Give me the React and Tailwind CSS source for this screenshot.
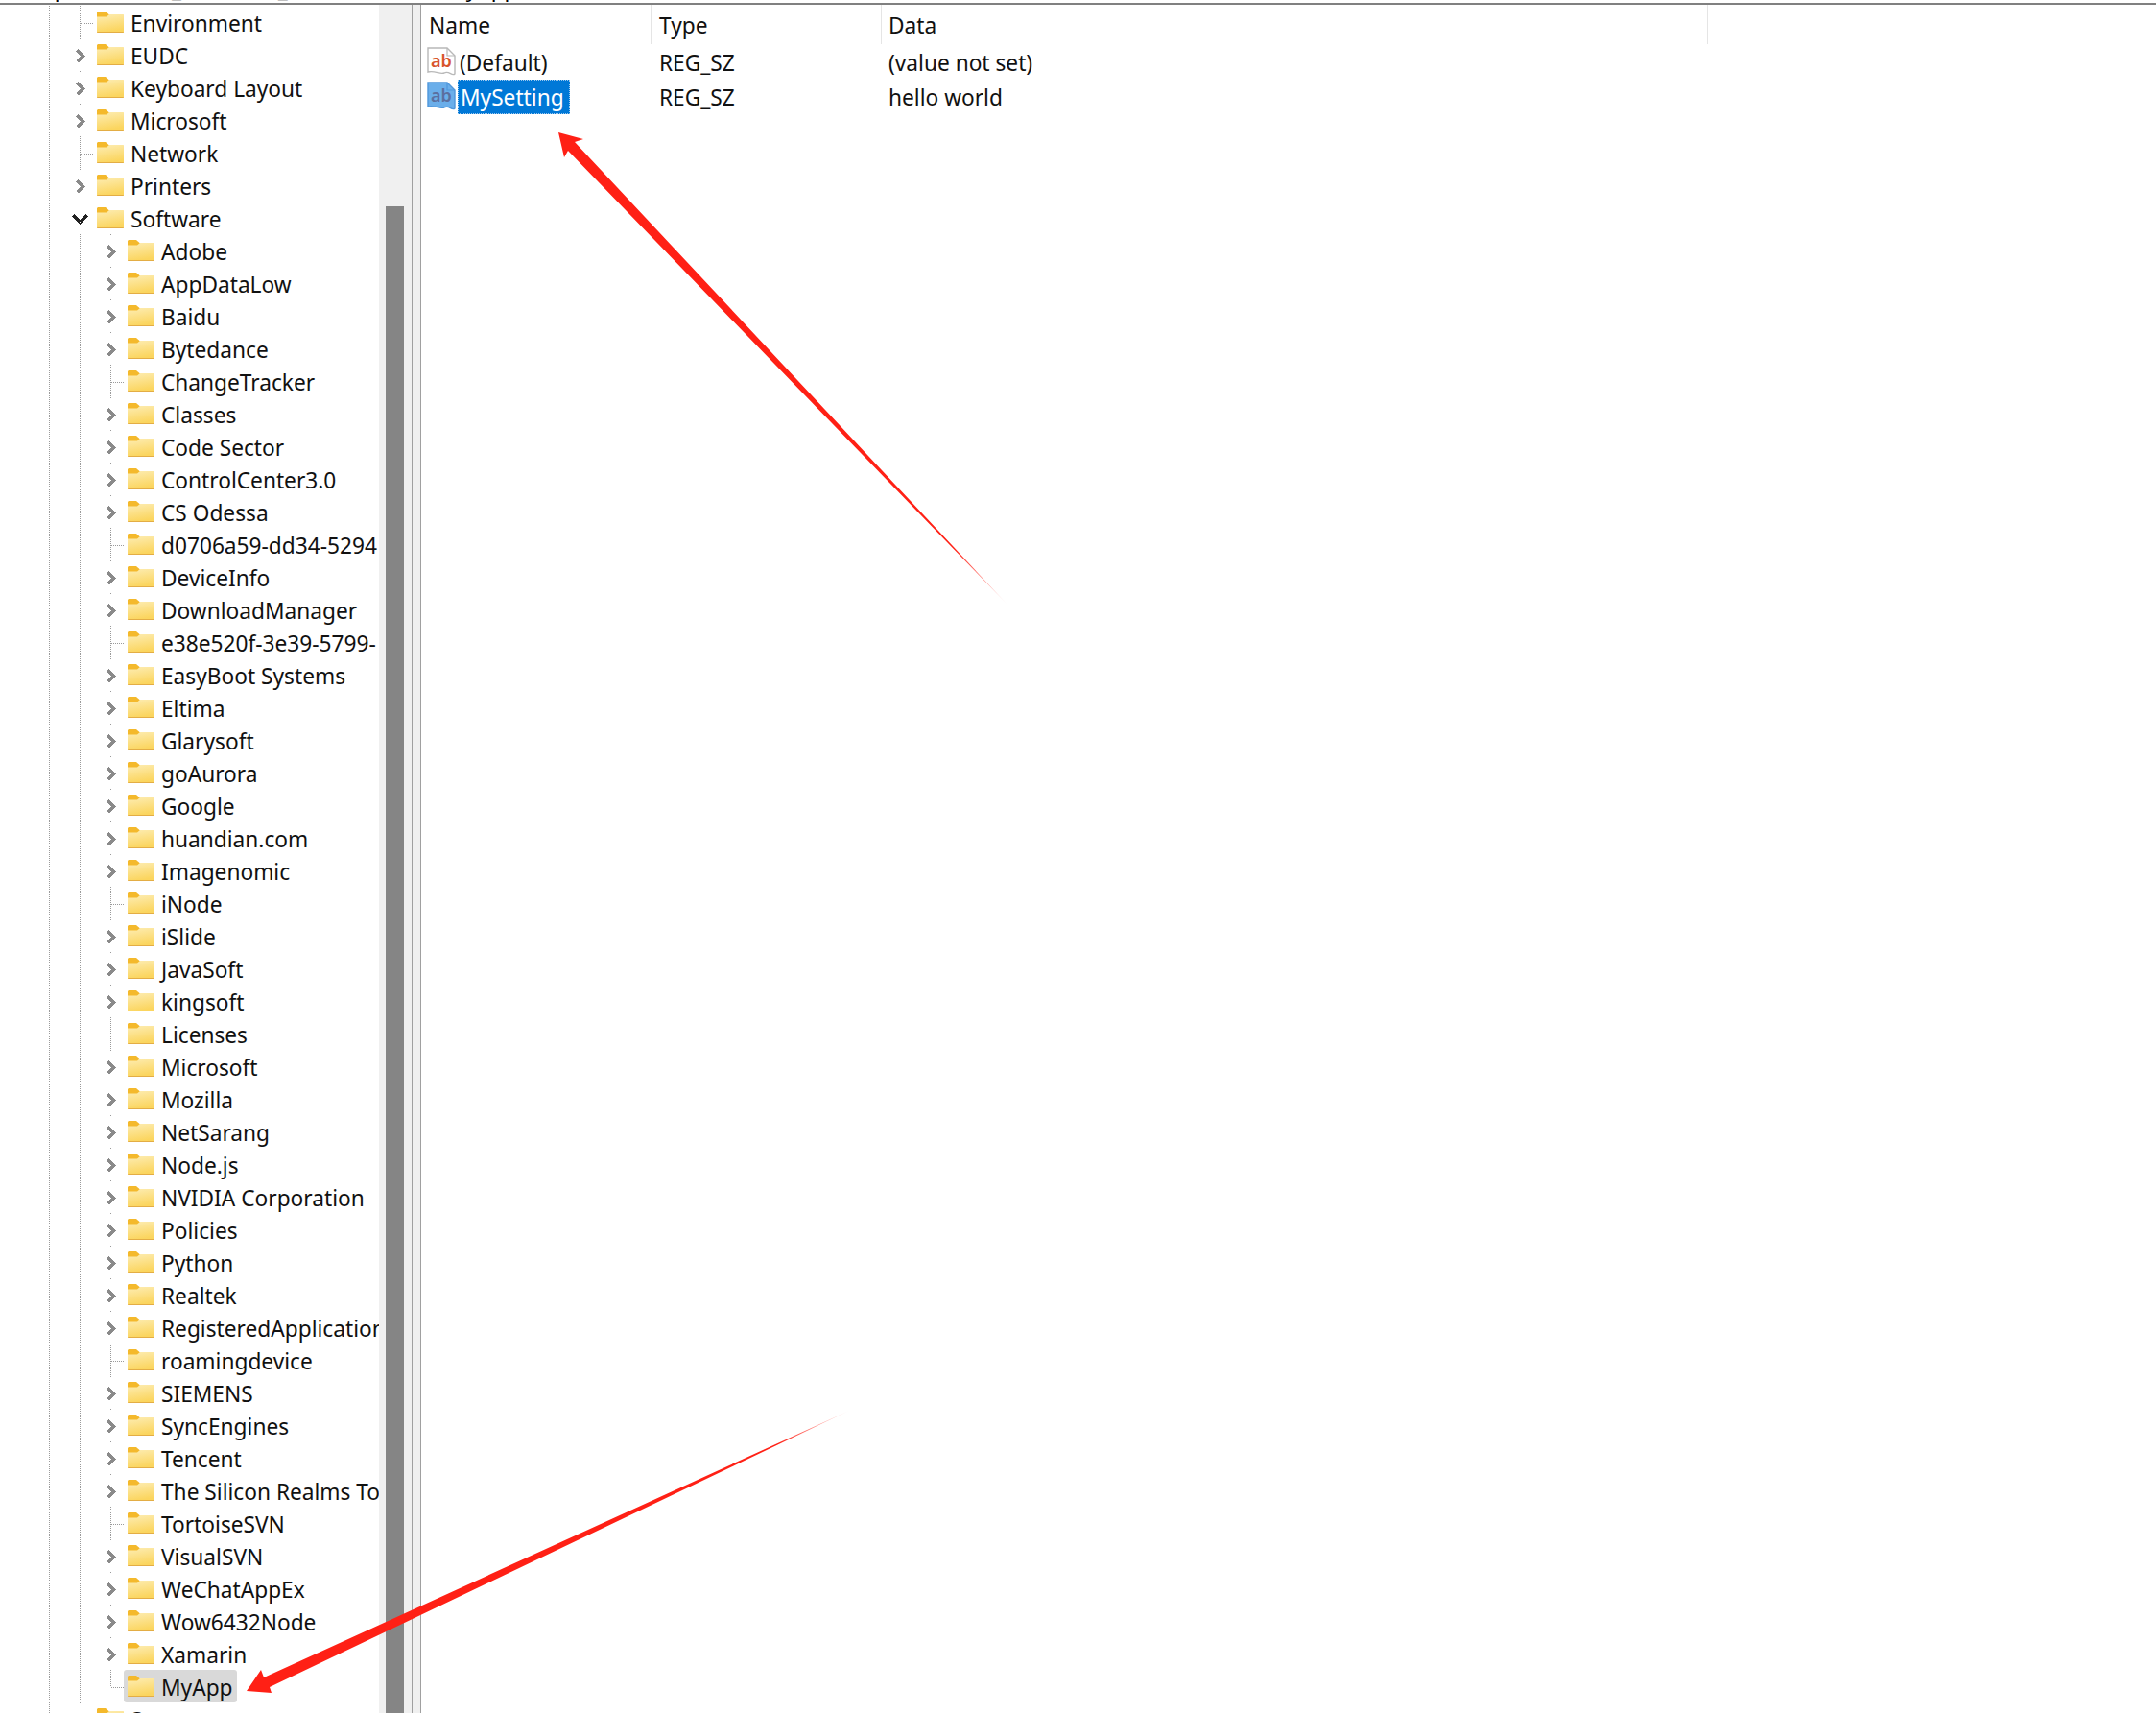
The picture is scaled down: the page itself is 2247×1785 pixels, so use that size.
import React from 'react';

const UI_FONT = "font-['Noto_Sans','Open_Sans',sans-serif]";

// c = has children, l = leaf, o = expanded
const TOP_KEYS = [
  ['Environment', 'l'], ['EUDC', 'c'], ['Keyboard Layout', 'c'], ['Microsoft', 'c'],
  ['Network', 'l'], ['Printers', 'c'], ['Software', 'o'],
];

const SOFTWARE_KEYS = [
  ['Adobe', 'c'], ['AppDataLow', 'c'], ['Baidu', 'c'], ['Bytedance', 'c'], ['ChangeTracker', 'l'],
  ['Classes', 'c'], ['Code Sector', 'c'], ['ControlCenter3.0', 'c'], ['CS Odessa', 'c'],
  ['d0706a59-dd34-5294', 'l'], ['DeviceInfo', 'c'], ['DownloadManager', 'c'],
  ['e38e520f-3e39-5799-', 'l'], ['EasyBoot Systems', 'c'], ['Eltima', 'c'], ['Glarysoft', 'c'],
  ['goAurora', 'c'], ['Google', 'c'], ['huandian.com', 'c'], ['Imagenomic', 'c'], ['iNode', 'l'],
  ['iSlide', 'c'], ['JavaSoft', 'c'], ['kingsoft', 'c'], ['Licenses', 'l'], ['Microsoft', 'c'],
  ['Mozilla', 'c'], ['NetSarang', 'c'], ['Node.js', 'c'], ['NVIDIA Corporation', 'c'], ['Policies', 'c'],
  ['Python', 'c'], ['Realtek', 'c'], ['RegisteredApplications', 'c'], ['roamingdevice', 'l'],
  ['SIEMENS', 'c'], ['SyncEngines', 'c'], ['Tencent', 'c'], ['The Silicon Realms Toolworks', 'c'],
  ['TortoiseSVN', 'l'], ['VisualSVN', 'c'], ['WeChatAppEx', 'c'], ['Wow6432Node', 'c'], ['Xamarin', 'c'],
];

function Folder() {
  return (
    <svg width="28" height="22" viewBox="0 0 28 22" className="shrink-0">
      <defs>
        <linearGradient id="folderBody" x1="0" y1="0" x2="0.25" y2="1">
          <stop offset="0" stopColor="#fdedb4" />
          <stop offset="1" stopColor="#fbd55e" />
        </linearGradient>
      </defs>
      <path d="M1 0H9L13 3.5V7H0V1Z" fill="#f4b92c" />
      <path d="M0 5.5H10L13 3H27.5Q28 3 28 3.5V21Q28 22 27 22H1Q0 22 0 21Z" fill="url(#folderBody)" />
      <path d="M0 21H28V21.2Q28 22 27 22H1Q0 22 0 21.2Z" fill="#e3ad45" />
    </svg>
  );
}

// dotted tree guides and the expander chevron, drawn per row
function Gutter({ level, kind, last }) {
  const width = level === 1 ? 97 : 129;
  const x = level === 1 ? 83.5 : 115.5;
  return (
    <svg width={width} height="34" className="shrink-0" shapeRendering="crispEdges">
      <g stroke="#9a9a9a" strokeDasharray="1 1" fill="none">
        <path d="M51.5 0V34" />
        {level === 2 && <path d="M83.5 0V34" />}
        {kind === 'l' && <path d={`M${x} 0V${last ? 18 : 34}M${x} 18.5H${x + 15}`} />}
        {kind !== 'l' && <path d={`M${x} 0V1`} />}
      </g>
      {kind === 'c' && (
        <polyline
          points={`${x - 3} 12.5 ${x + 3} 18.5 ${x - 3} 24.5`}
          fill="none"
          stroke="#8a8a8a"
          strokeWidth="3"
        />
      )}
      {kind === 'o' && (
        <polyline points="76.5 14.5 83.5 21.5 90.5 14.5" fill="none" stroke="#222222" strokeWidth="3" />
      )}
    </svg>
  );
}

function TreeRow({ name, kind, level, selected, last }) {
  return (
    <div className="flex h-[34px] items-stretch whitespace-nowrap">
      <Gutter level={level} kind={kind} last={last} />
      <div className={`flex items-center gap-[7px] rounded-[3px] pl-1 pr-1 ${selected ? 'bg-[#d9d9d9]' : ''}`}>
        <Folder />
        <span className="pt-[3px] text-[22.7px] leading-[31px] text-[#111111]">{name}</span>
      </div>
    </div>
  );
}

function StringIcon({ selected }) {
  return (
    <svg width="32" height="32" viewBox="0 0 32 32" className="shrink-0">
      <path
        d="M1 1H21L29 9V28C26 31 23 24 18 27C14 29 8 24 1 26Z"
        fill={selected ? '#6aaeea' : '#ffffff'}
        stroke={selected ? '#4f97dc' : '#b8b8b8'}
        strokeWidth="1.4"
      />
      <path d="M21 1V9H29" fill="none" stroke={selected ? '#4f97dc' : '#b8b8b8'} strokeWidth="1.2" />
      <text
        x="4"
        y="21"
        fontFamily="'Noto Sans', sans-serif"
        fontSize="18"
        fontWeight="600"
        fill={selected ? '#5b6f9f' : '#d8542c'}
      >
        ab
      </text>
    </svg>
  );
}

function ValueRow({ name, type, data, selected }) {
  return (
    <div className="grid h-[36px] grid-cols-[240px_240px_1fr] items-center text-[22.7px] text-[#111111]">
      <div className="flex items-center pl-[6px]">
        <StringIcon selected={selected} />
        <span
          className={`flex h-[36px] items-center pl-[2px] pr-[5px] pt-[3px] ${
            selected ? 'border border-dotted border-[#9cc8ee] bg-[#0078d7] text-white' : ''
          }`}
        >
          {name}
        </span>
      </div>
      <div className="pl-2 pt-[3px]">{type}</div>
      <div className="pl-[7px] pt-[3px]">{data}</div>
    </div>
  );
}

function HeaderCell({ width, className = '', children }) {
  return (
    <div className={`flex h-[41px] items-center border-r border-[#e5e5e5] pt-[4px] ${width} ${className}`}>
      {children}
    </div>
  );
}

function Arrows() {
  return (
    <svg className="pointer-events-none absolute inset-0" width="2247" height="1785">
      <defs>
        <linearGradient id="arrowUp" gradientUnits="userSpaceOnUse" x1="582" y1="138" x2="1050" y2="630">
          <stop offset="0.88" stopColor="#ff2015" />
          <stop offset="1" stopColor="#ff2015" stopOpacity="0.1" />
        </linearGradient>
        <linearGradient id="arrowDown" gradientUnits="userSpaceOnUse" x1="257" y1="1762" x2="885" y2="1470">
          <stop offset="0.88" stopColor="#ff2015" />
          <stop offset="1" stopColor="#ff2015" stopOpacity="0.1" />
        </linearGradient>
      </defs>
      <polygon points="582,138 608,145 599,148 1050,630 592,157 588,164" fill="url(#arrowUp)" />
      <polygon points="257,1762 272,1740 275,1748 885,1470 281,1758 283,1764" fill="url(#arrowDown)" />
    </svg>
  );
}

export default function App() {
  return (
    <div className={`relative h-[1785px] w-[2247px] overflow-hidden bg-white ${UI_FONT}`}>
      {/* bottom of the address bar, cut off by the crop */}
      <div className="h-[3px] overflow-hidden">
        <div className="-mt-[28px] whitespace-nowrap pl-2 text-[22.5px] leading-[34px] text-black">
          Computer\HKEY_CURRENT_USER\Software\MyApp
        </div>
      </div>
      <div className="h-[2px] bg-[#808080]" />

      <div className="flex h-[1780px]">
        {/* key tree */}
        <div className="w-[395px] shrink-0 overflow-hidden pt-px">
          {TOP_KEYS.map(([name, kind]) => (
            <TreeRow key={name} name={name} kind={kind} level={1} />
          ))}
          {SOFTWARE_KEYS.map(([name, kind]) => (
            <TreeRow key={name} name={name} kind={kind} level={2} />
          ))}
          <TreeRow name="MyApp" kind="l" level={2} selected last />
          <TreeRow name="System" kind="c" level={1} />
        </div>

        {/* scrollbar */}
        <div className="flex w-[34px] shrink-0 flex-col bg-[#f0f0f0] pl-[7px] pt-[210px]">
          <div className="w-[19px] flex-1 bg-[#858585]" />
        </div>

        {/* splitter */}
        <div className="h-full w-[10px] shrink-0 border-x border-[#a0a0a0] bg-[#f0f0f0]" />

        {/* values */}
        <div className="min-w-0 flex-1">
          <div className="flex text-[22.7px] text-[#111111]">
            <HeaderCell width="w-[240px]" className="pl-2">Name</HeaderCell>
            <HeaderCell width="w-[240px]" className="pl-2">Type</HeaderCell>
            <HeaderCell width="w-[861px]" className="pl-[7px]">Data</HeaderCell>
          </div>
          <ValueRow name="(Default)" type="REG_SZ" data="(value not set)" />
          <ValueRow name="MySetting" type="REG_SZ" data="hello world" selected />
        </div>
      </div>

      <Arrows />
    </div>
  );
}
